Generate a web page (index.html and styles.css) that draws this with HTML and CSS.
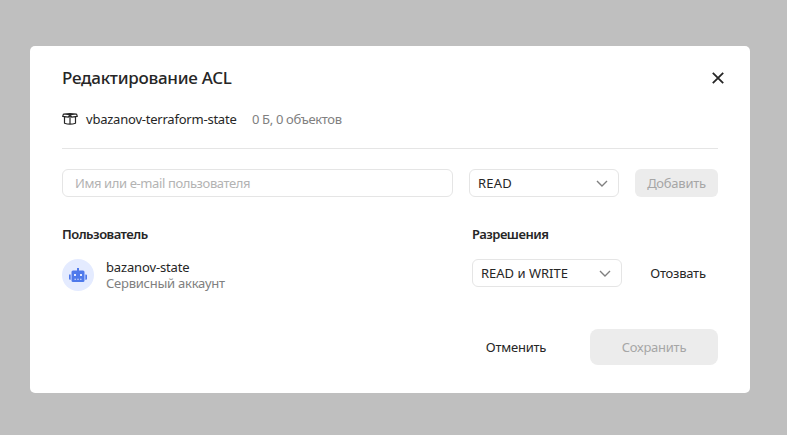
FILE: index.html
```html
<!DOCTYPE html>
<html lang="ru">
<head>
<meta charset="utf-8">
<title>Редактирование ACL</title>
<link rel="stylesheet" href="styles.css">
</head>
<body>
<div class="dialog" role="dialog">
  <header class="header">
    <h1 class="title">Редактирование ACL</h1>
    <button class="close" aria-label="Закрыть"><svg width="12" height="12" viewBox="0 0 12 12"><path d="M.8.8l10.400 10.400M11.200.8L.8 11.200"/></svg></button>
  </header>
  <div class="bucket">
    <svg class="bucket-icon" width="16" height="12" viewBox="0 0 16 12"><path d="M1.500 1Q8 .4 14.500 1M1.500 1L.7 3.400l5.600.8L8 1.600l1.700 2.600 5.600-.8L14.500 1 8 1.600zM2.500 4v6.200Q8 12 13.500 10.200V4M8 2v9"/></svg>
    <span class="bucket-name">vbazanov-terraform-state</span>
    <span class="bucket-info">0 Б, 0 объектов</span>
  </div>
  <div class="add-row">
    <input class="field" placeholder="Имя или e-mail пользователя">
    <div class="select"><span class="short-value">READ</span><svg class="chevron" width="12" height="7" viewBox="0 0 12 7"><path d="M1 .9l5 5 5-5"/></svg></div>
    <button class="button add" disabled><span>Добавить</span></button>
  </div>
  <div class="grid">
    <h2 class="column-title">Пользователь</h2>
    <h2 class="column-title">Разрешения</h2>
    <div class="user">
      <div class="avatar"><svg width="18" height="16" viewBox="0 0 18 16"><path fill-rule="evenodd" d="M8 1h2v2.500h4q1.500 0 1.500 1.500v8.500q0 1.500-1.500 1.500H4q-1.500 0-1.500-1.500V5q0-1.500 1.500-1.500h4zM5 7v2h2V7zm6 0v2h2V7zM5.500 11.800v1h1.400v-1zm2.800 0v1h1.400v-1zm2.800 0v1h1.400v-1zM0 7.500h1.700v5.300H1q-1 0-1-1zm16.300 0H17q1 0 1 1v3.300q0 1-1 1h-.7z"/></svg></div>
      <div class="user-text">
        <span class="user-name">bazanov-state</span>
        <span class="user-kind">Сервисный аккаунт</span>
      </div>
    </div>
    <div class="permission">
      <div class="select"><span>READ и WRITE</span><svg class="chevron" width="12" height="7" viewBox="0 0 12 7"><path d="M1 .9l5 5 5-5"/></svg></div>
      <button class="button revoke"><span>Отозвать</span></button>
    </div>
  </div>
  <footer class="footer">
    <button class="button cancel"><span>Отменить</span></button>
    <button class="button save" disabled><span>Сохранить</span></button>
  </footer>
</div>
</body>
</html>
```
FILE: styles.css
```css
* { box-sizing: border-box; }
body {
  margin: 0;
  padding: 46px 0 0 30px;
  height: 435px;
  overflow: hidden;
  background: #bfbfbf;
  color: #262626;
  font: 13px/16px "Noto Sans", sans-serif;
}
button, input { font: inherit; color: inherit; margin: 0; border: 0; padding: 0; background: none; }
h1, h2 { margin: 0; }
svg { display: block; flex: none; fill: none; stroke: currentColor; }
span { white-space: nowrap; }
.dialog { width: 720px; height: 347px; padding: 20px 32px 0; background: #fff; border-radius: 5px; }
.header { display: flex; justify-content: space-between; align-items: center; height: 24px; }
.title { font-size: 17px; line-height: 24px; font-weight: 500; letter-spacing: -.26px; }
.close { display: grid; place-items: center; width: 24px; height: 24px; margin-right: -12px; }
.close svg { stroke-width: 1.8; }
.bucket { display: flex; align-items: center; height: 59px; border-bottom: 1px solid #e5e5e5; }
.bucket-icon { stroke-width: 1.2; stroke-linejoin: round; margin-right: 8px; }
.bucket-name { width: 151px; letter-spacing: -.22px; }
.bucket-info { margin-left: 15px; color: #808080; letter-spacing: -.35px; }
.add-row { display: flex; gap: 16px; margin-top: 20px; }
.field { width: 391px; height: 28px; padding: 0 12px; border: 1px solid #e5e5e5; border-radius: 6px; letter-spacing: -.4px; }
.field::placeholder { color: #b3b3b3; opacity: 1; }
.select { display: flex; align-items: center; justify-content: space-between; width: 150px; height: 28px; padding: 0 10px 0 8px; border: 1px solid #e5e5e5; border-radius: 6px; }
.short-value { letter-spacing: .25px; }
.chevron { color: #808080; stroke-width: 1.4; }
.button { border-radius: 6px; text-align: center; letter-spacing: -.25px; }
.button:disabled { background: #ececec; color: #a6a6a6; }
.add { width: 83px; height: 28px; }
.grid { display: grid; grid-template-columns: 410px 246px; row-gap: 17px; margin-top: 29px; }
.column-title { font-size: 13px; line-height: 16px; font-weight: 600; white-space: nowrap; letter-spacing: -.5px; }
.user { display: flex; gap: 12px; }
.avatar { display: grid; place-items: center; width: 32px; height: 32px; border-radius: 50%; background: #e4ebff; color: #4e79eb; }
.avatar svg { fill: currentColor; stroke: none; }
.user-text { display: flex; flex-direction: column; }
.user-name { letter-spacing: -.15px; }
.user-kind { color: #808080; letter-spacing: -.25px; }
.permission { display: flex; gap: 16px; }
.revoke { width: 80px; height: 28px; }
.footer { display: flex; justify-content: flex-end; gap: 16px; margin-top: 38px; }
.cancel { width: 116px; height: 36px; }
.save { width: 128px; height: 36px; border-radius: 8px; }
```
